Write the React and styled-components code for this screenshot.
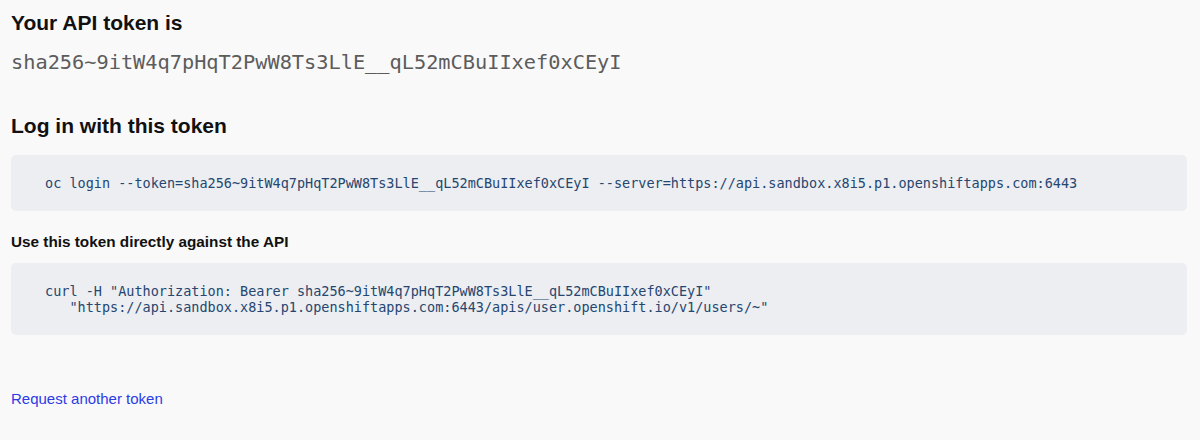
import React from 'react';
import styled, { createGlobalStyle } from 'styled-components';

const token = 'sha256~9itW4q7pHqT2PwW8Ts3LlE__qL52mCBuIIxef0xCEyI';
const server = 'https://api.sandbox.x8i5.p1.openshiftapps.com:6443';

const GlobalStyle = createGlobalStyle`
  html, body {
    margin: 0;
    padding: 0;
    background: #f9f9f9;
  }
  body {
    font-family: "Liberation Sans", Arial, sans-serif;
    color: #111;
  }
`;

const Page = styled.div`
  padding: 11px 13px 20px 11px;
  display: flex;
  flex-direction: column;
`;

const Title = styled.h2`
  margin: 0;
  font-size: 21px;
  line-height: 24px;
  font-weight: 700;
  color: #111;
  margin-top: ${(p) => p.$top || 0}px;
`;

const Token = styled.div`
  margin-top: 13px;
  font-family: "DejaVu Sans Mono", "Liberation Mono", monospace;
  font-size: 20.3px;
  line-height: 28px;
  color: #5c5c5c;
`;

const Sub = styled.h4`
  margin: 21px 0 0;
  font-size: 15.3px;
  line-height: 20px;
  font-weight: 700;
  color: #111;
`;

const Code = styled.pre`
  margin: ${(p) => p.$top || 0}px 0 0;
  padding: 20px 34px;
  background: #eceef2;
  border-radius: 5px;
  font-family: "DejaVu Sans Mono", "Liberation Mono", monospace;
  font-size: 13.5px;
  line-height: 16px;
  color: #26466f;
  white-space: pre;
  overflow: hidden;
`;

const Link = styled.a`
  margin-top: 54px;
  align-self: flex-start;
  font-size: 15px;
  line-height: 20px;
  color: #2b3ce6;
  text-decoration: none;
  cursor: pointer;
`;

export default function App() {
  return (
    <>
      <GlobalStyle />
      <Page>
        <Title>Your API token is</Title>
        <Token>{token}</Token>
        <Title $top={38}>Log in with this token</Title>
        <Code $top={17}>{`oc login --token=${token} --server=${server}`}</Code>
        <Sub>Use this token directly against the API</Sub>
        <Code $top={11}>{`curl -H "Authorization: Bearer ${token}"
   "${server}/apis/user.openshift.io/v1/users/~"`}</Code>
        <Link href="#">Request another token</Link>
      </Page>
    </>
  );
}
